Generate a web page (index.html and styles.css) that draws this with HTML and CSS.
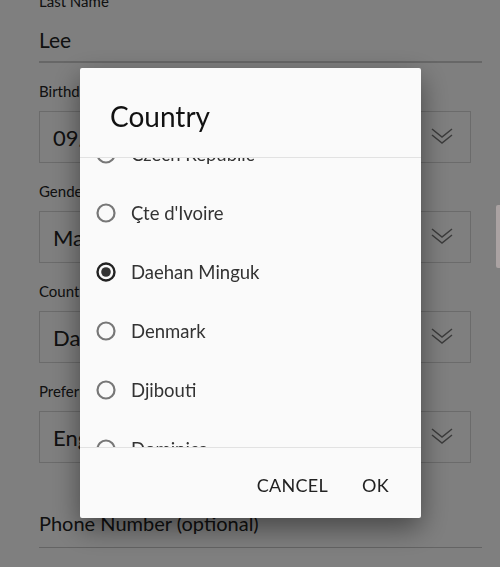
FILE: index.html
```html
<!DOCTYPE html>
<html>
<head>
<meta charset="utf-8">
<link rel="stylesheet" href="styles.css">
</head>
<body>
<div class="form">
  <div class="tf-label">Last Name</div>
  <div class="tf-value">Lee</div>
  <div class="tf-line"></div>

  <div class="sel-label">Birthday</div>
  <div class="sel-box"><span class="sel-text">09/12/1990</span>
    <svg class="chev" width="22" height="20" viewBox="0 0 22 20"><path d="M1 2 L11 10 L21 2 M1 8 L11 16 L21 8" fill="none" stroke="#777" stroke-width="1.5"/></svg></div>

  <div class="sel-label">Gender</div>
  <div class="sel-box"><span class="sel-text">Male</span>
    <svg class="chev" width="22" height="20" viewBox="0 0 22 20"><path d="M1 2 L11 10 L21 2 M1 8 L11 16 L21 8" fill="none" stroke="#777" stroke-width="1.5"/></svg></div>

  <div class="sel-label">Country</div>
  <div class="sel-box"><span class="sel-text">Daehan Minguk</span>
    <svg class="chev" width="22" height="20" viewBox="0 0 22 20"><path d="M1 2 L11 10 L21 2 M1 8 L11 16 L21 8" fill="none" stroke="#777" stroke-width="1.5"/></svg></div>

  <div class="sel-label">Preferred Language</div>
  <div class="sel-box"><span class="sel-text">English</span>
    <svg class="chev" width="22" height="20" viewBox="0 0 22 20"><path d="M1 2 L11 10 L21 2 M1 8 L11 16 L21 8" fill="none" stroke="#777" stroke-width="1.5"/></svg></div>

  <div class="phone">Phone Number (optional)</div>
  <div class="tf-line phone-line"></div>
</div>

<div class="scrim"></div>
<div class="scrollbar"></div>

<div class="dialog">
  <div class="dlg-title">Country</div>
  <div class="dlg-list">
    <div class="item first"><svg class="radio" width="22" height="22" viewBox="0 0 22 22"><circle cx="11" cy="11" r="8.5" fill="none" stroke="#777" stroke-width="2.2"/></svg><span>Czech Republic</span></div>
    <div class="item"><svg class="radio" width="22" height="22" viewBox="0 0 22 22"><circle cx="11" cy="11" r="8.5" fill="none" stroke="#777" stroke-width="2.2"/></svg><span>Çte d'Ivoire</span></div>
    <div class="item"><svg class="radio" width="22" height="22" viewBox="0 0 22 22"><circle cx="11" cy="11" r="8.5" fill="none" stroke="#222" stroke-width="2.4"/><circle cx="11" cy="11" r="4.8" fill="#333"/></svg><span>Daehan Minguk</span></div>
    <div class="item"><svg class="radio" width="22" height="22" viewBox="0 0 22 22"><circle cx="11" cy="11" r="8.5" fill="none" stroke="#777" stroke-width="2.2"/></svg><span>Denmark</span></div>
    <div class="item"><svg class="radio" width="22" height="22" viewBox="0 0 22 22"><circle cx="11" cy="11" r="8.5" fill="none" stroke="#777" stroke-width="2.2"/></svg><span>Djibouti</span></div>
    <div class="item"><svg class="radio" width="22" height="22" viewBox="0 0 22 22"><circle cx="11" cy="11" r="8.5" fill="none" stroke="#777" stroke-width="2.2"/></svg><span>Dominica</span></div>
  </div>
  <div class="dlg-actions">
    <span class="btn">CANCEL</span>
    <span class="btn">OK</span>
  </div>
</div>
</body>
</html>
```

FILE: styles.css
```css
html, body {
  margin: 0;
  padding: 0;
  width: 500px;
  height: 567px;
  overflow: hidden;
  background: #fff;
  font-family: "Lato", "Noto Sans", sans-serif;
  color: #222;
}

.form {
  display: flex;
  flex-direction: column;
  padding: 0 29px 0 39px;
  margin-top: -9px;
}

.tf-label {
  font-size: 15px;
  line-height: 20px;
  height: 20px;
}

.tf-value {
  font-size: 21px;
  line-height: 30px;
  margin-top: 14px;
}

.tf-line {
  height: 2px;
  background: #cfcfcf;
  margin-top: 6px;
  margin-right: -11px;
}

.sel-label {
  font-size: 15px;
  line-height: 20px;
  height: 20px;
  margin-top: 18px;
  white-space: nowrap;
}

.sel-box {
  height: 50px;
  margin-top: 10px;
  border: 1px solid #d6d6d6;
  display: flex;
  align-items: center;
  justify-content: space-between;
  padding: 0 17px 0 13px;
}

.sel-text {
  font-size: 22px;
}

.chev {
  display: block;
}

.phone {
  font-size: 20px;
  line-height: 30px;
  margin-top: 45px;
}

.phone-line {
  margin-top: 9px;
  height: 1px;
  background: #c8c8c8;
}

.scrim {
  position: fixed;
  inset: 0;
  background: rgba(0, 0, 0, 0.5);
}

.scrollbar {
  position: fixed;
  right: 0;
  top: 205px;
  width: 4px;
  height: 63px;
  background: #aaa2a2;
  border-radius: 2px 0 0 2px;
}

.dialog {
  position: fixed;
  left: 80px;
  top: 68px;
  width: 341px;
  height: 450px;
  background: #fafafa;
  border-radius: 2px;
  box-shadow: 0 10px 28px rgba(0, 0, 0, 0.45);
  display: flex;
  flex-direction: column;
}

.dlg-title {
  height: 90px;
  box-sizing: border-box;
  padding: 30px 0 0 30px;
  font-size: 28px;
  line-height: 36px;
  color: #111;
  border-bottom: 1px solid #e2e2e2;
}

.dlg-list {
  height: 290px;
  box-sizing: border-box;
  overflow: hidden;
  display: flex;
  flex-direction: column;
  border-bottom: 1px solid #e2e2e2;
}

.item {
  flex: none;
  height: 59px;
  display: flex;
  align-items: center;
  padding-left: 15px;
  gap: 14px;
  font-size: 18.5px;
  color: #333;
}

.item.first {
  margin-top: -34px;
}

.radio {
  display: block;
  flex: none;
}

.dlg-actions {
  flex: 1;
  display: flex;
  justify-content: flex-end;
  align-items: center;
  gap: 34px;
  padding-right: 32px;
  padding-top: 3px;
}

.btn {
  font-size: 18px;
  color: #222;
  letter-spacing: 0.3px;
}
```
